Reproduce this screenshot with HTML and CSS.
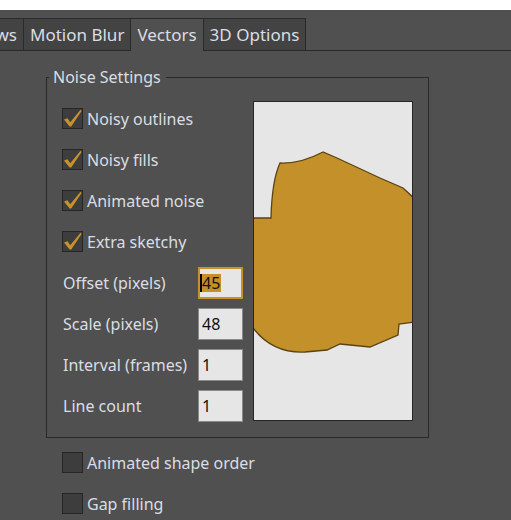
FILE: index.html
```html
<!DOCTYPE html>
<html>
<head>
<meta charset="utf-8">
<link rel="stylesheet" href="styles.css">
</head>
<body>
<div class="topstrip"></div>
<div class="tabbar">
  <div class="tab tab-clipped">ws</div>
  <div class="tab">Motion Blur</div>
  <div class="tab active">Vectors</div>
  <div class="tab">3D Options</div>
</div>
<main class="panel">
  <fieldset class="group">
    <legend>Noise Settings</legend>
    <div class="group-body">
      <div class="fields">
        <div class="row"><span class="check on"><svg viewBox="0 0 19 19" width="19" height="19"><path d="M1 10.5 L4.5 9.2 L7.2 13.2 L17.6 0.8 L18.6 2 L8.2 17.6 L6.6 17.6 Z"/></svg></span><span class="label">Noisy outlines</span></div>
        <div class="row"><span class="check on"><svg viewBox="0 0 19 19" width="19" height="19"><path d="M1 10.5 L4.5 9.2 L7.2 13.2 L17.6 0.8 L18.6 2 L8.2 17.6 L6.6 17.6 Z"/></svg></span><span class="label">Noisy fills</span></div>
        <div class="row"><span class="check on"><svg viewBox="0 0 19 19" width="19" height="19"><path d="M1 10.5 L4.5 9.2 L7.2 13.2 L17.6 0.8 L18.6 2 L8.2 17.6 L6.6 17.6 Z"/></svg></span><span class="label">Animated noise</span></div>
        <div class="row"><span class="check on"><svg viewBox="0 0 19 19" width="19" height="19"><path d="M1 10.5 L4.5 9.2 L7.2 13.2 L17.6 0.8 L18.6 2 L8.2 17.6 L6.6 17.6 Z"/></svg></span><span class="label">Extra sketchy</span></div>
        <div class="row field"><span class="flabel">Offset (pixels)</span><div class="num focused"><span class="sel">45</span></div></div>
        <div class="row field"><span class="flabel">Scale (pixels)</span><div class="num">48</div></div>
        <div class="row field"><span class="flabel">Interval (frames)</span><div class="num">1</div></div>
        <div class="row field"><span class="flabel">Line count</span><div class="num">1</div></div>
      </div>
      <div class="preview">
        <svg width="158" height="318" viewBox="0 0 158 318">
          <path class="blob" d="M-3 116 L17 116 C17.5 96 20 74 26 61 Q46 62 69 50 L83 56 L126 76 L149 86 L161 97 L161 220 L145 222 L144 233 L116 245 L86 242 L73 248 L51 250 C28 251 10 242 -3 223 Z"/>
        </svg>
      </div>
    </div>
  </fieldset>
  <div class="extra">
    <div class="row"><span class="check"></span><span class="label">Animated shape order</span></div>
    <div class="row"><span class="check"></span><span class="label">Gap filling</span></div>
  </div>
</main>
</body>
</html>
```
FILE: styles.css
```css
html, body {
  margin: 0;
  padding: 0;
}
body {
  background: #505050;
  font-family: "Noto Sans", "Open Sans", sans-serif;
  color: #d9dee4;
  width: 511px;
  height: 520px;
  overflow: hidden;
}
.topstrip {
  height: 10px;
  background: #ffffff;
}
.tabbar {
  display: flex;
  height: 32px;
  margin-top: 8px;
  border-bottom: 1px solid #2a2a2a;
}
.tab {
  display: flex;
  align-items: center;
  padding: 0 6px 1px 6px;
  font-size: 17px;
  background: #434343;
  border-top: 1px solid #2a2a2a;
  border-right: 1px solid #2a2a2a;
  white-space: nowrap;
}
.tab-clipped {
  width: 24px;
  box-sizing: border-box;
  justify-content: flex-end;
  overflow: hidden;
}
.tab.active {
  background: #505050;
  margin-bottom: -1px;
}
.panel {
  display: block;
}
.group {
  box-sizing: border-box;
  width: 383px;
  min-width: 0;
  margin: 16px 0 0 46px;
  padding: 11px 15px 11px 15px;
  border: 1px solid #2a2a2a;
}
.group legend {
  font-size: 16px;
  line-height: 20px;
  padding: 0 5px 0 4px;
  margin-left: -13px;
  color: #d9dee4;
}
.group-body {
  display: grid;
  grid-template-columns: 181px 160px;
  column-gap: 10px;
}
.fields {
  display: flex;
  flex-direction: column;
}
.row {
  display: flex;
  align-items: center;
  height: 41px;
  font-size: 16px;
}
.check {
  box-sizing: border-box;
  width: 21px;
  height: 21px;
  border: 1px solid #262626;
  background: #3d3d3d;
  margin-right: 4px;
  flex: none;
  display: flex;
}
.check svg {
  display: block;
}
.check path {
  fill: #c8922a;
}
.label {
  padding-top: 1px;
}
.flabel {
  flex: 1;
  padding-left: 1px;
}
.num {
  box-sizing: border-box;
  width: 45px;
  height: 32px;
  border: 1px solid #8a8a8a;
  background: #e6e6e6;
  color: #111111;
  font-size: 16px;
  padding-left: 3px;
  display: flex;
  align-items: center;
}
.num.focused {
  border: 2px solid #c8922a;
  padding-left: 0;
}
.sel {
  background: #c68f2a;
  border-left: 2px solid #000000;
  line-height: 18px;
  padding-right: 1px;
}
.preview {
  box-sizing: border-box;
  width: 160px;
  height: 320px;
  margin-top: 3px;
  border: 1px solid #262626;
  background: #e6e6e6;
  overflow: hidden;
}
.preview svg {
  display: block;
}
.blob {
  fill: #c4902a;
  stroke: #5a4213;
  stroke-width: 1.3;
}
.extra {
  margin-top: 4px;
  padding-left: 62px;
}
```
